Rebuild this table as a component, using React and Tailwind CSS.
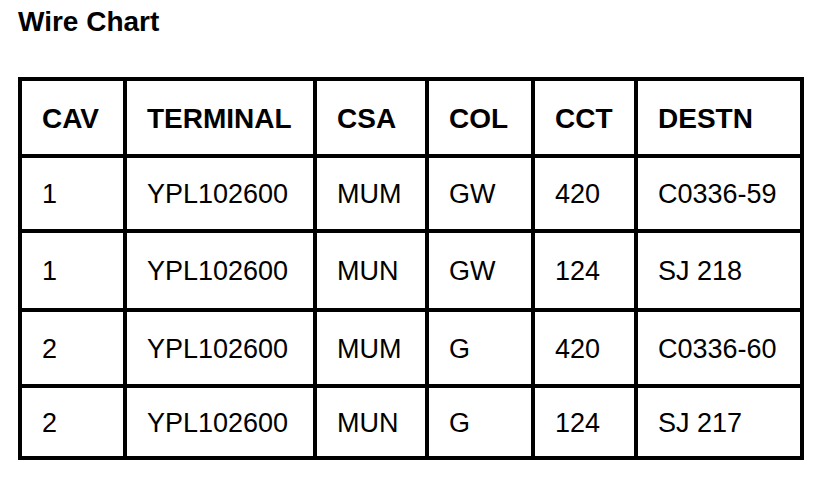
import React from "react";

const cols = ["w-[105px]", "w-[190px]", "w-[112px]", "w-[106px]", "w-[103px]", "w-[166px]"];

const header = ["CAV", "TERMINAL", "CSA", "COL", "CCT", "DESTN"];

const rows = [
  { h: "h-[75px]", cells: ["1", "YPL102600", "MUM", "GW", "420", "C0336-59"] },
  { h: "h-[79px]", cells: ["1", "YPL102600", "MUN", "GW", "124", "SJ 218"] },
  { h: "h-[76px]", cells: ["2", "YPL102600", "MUM", "G", "420", "C0336-60"] },
  { h: "h-[72px]", cells: ["2", "YPL102600", "MUN", "G", "124", "SJ 217"] },
];

function Row({ cells, h, bold }) {
  return (
    <div className={`flex ${h}`}>
      {cells.map((c, i) => (
        <div
          key={i}
          className={`${cols[i]} shrink-0 flex items-center pl-[20px] pt-[2px] border-r-4 border-b-4 border-black ${
            bold ? "font-bold text-[28px]" : "text-[27px]"
          }`}
        >
          {c}
        </div>
      ))}
    </div>
  );
}

export default function App() {
  return (
    <div
      className="w-[832px] h-[480px] bg-white text-black px-[18px]"
      style={{ fontFamily: '"Liberation Sans", Arial, sans-serif' }}
    >
      <h1 className="pt-[8px] h-[36px] text-[28px] font-bold leading-none">Wire Chart</h1>
      <div className="mt-[41px] inline-flex flex-col border-l-4 border-t-4 border-black">
        <Row cells={header} h="h-[77px]" bold />
        {rows.map((r, i) => (
          <Row key={i} cells={r.cells} h={r.h} />
        ))}
      </div>
    </div>
  );
}
